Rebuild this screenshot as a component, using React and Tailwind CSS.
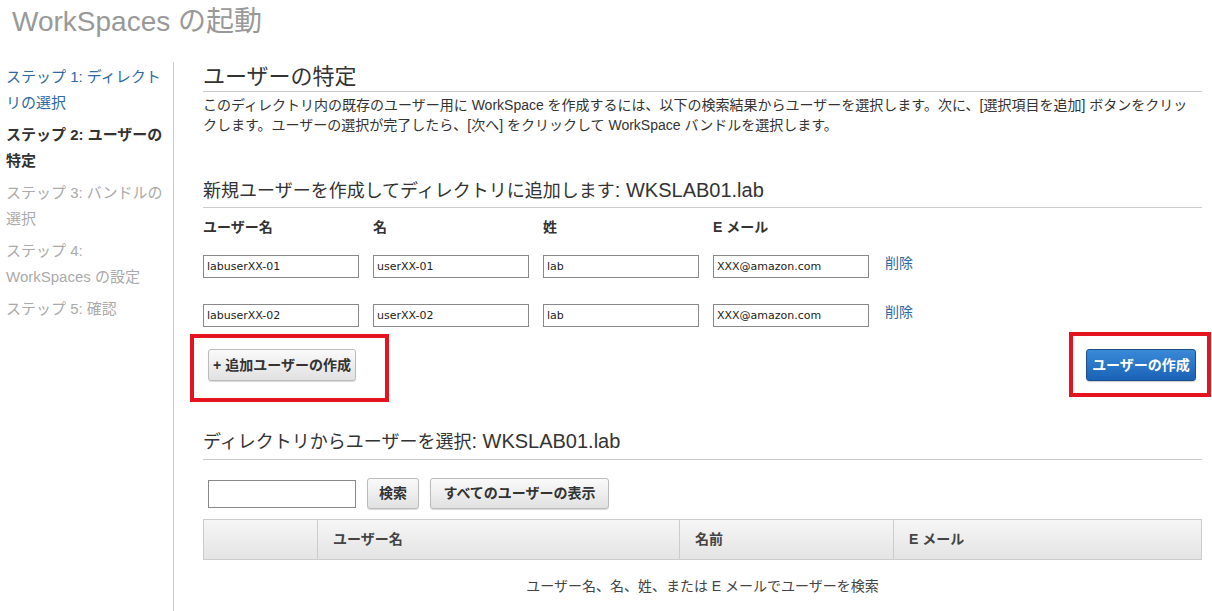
const FONT = "font-['Liberation_Sans','Noto_Sans_CJK_JP',sans-serif]";

const steps = [
  { lines: ['ステップ 1: ディレクト', 'リの選択'], cls: 'text-[#2d6aa3]' },
  { lines: ['ステップ 2: ユーザーの', '特定'], cls: 'text-[#333] font-bold' },
  { lines: ['ステップ 3: バンドルの', '選択'], cls: 'text-[#aaa]' },
  { lines: ['ステップ 4:', 'WorkSpaces の設定'], cls: 'text-[#aaa]' },
  { lines: ['ステップ 5: 確認'], cls: 'text-[#aaa]' },
];

const users = [
  ['labuserXX-01', 'userXX-01', 'lab', 'XXX@amazon.com'],
  ['labuserXX-02', 'userXX-02', 'lab', 'XXX@amazon.com'],
];

function Field({ value }) {
  return (
    <input
      readOnly
      value={value}
      className="w-[156px] h-[23px] border border-[#888] px-[3px] text-[11px] text-[#222] font-['DejaVu_Sans',sans-serif] outline-none"
    />
  );
}

function GrayButton({ children, className = '' }) {
  return (
    <button className={`rounded-[3px] border border-[#bbb] bg-gradient-to-b from-[#fafafa] to-[#e1e1e1] shadow-[0_1px_1px_rgba(0,0,0,0.15)] text-[14px] font-bold text-[#333] ${className}`}>
      {children}
    </button>
  );
}

export default function App() {
  return (
    <div className={`w-[1212px] h-[611px] overflow-hidden bg-white ${FONT}`}>
      <div className="h-[62px] pl-[12px] pt-[2px] text-[28px] leading-[40px] text-[#999]">
        WorkSpaces の起動
      </div>

      <div className="flex h-[549px]">
        {/* Steps */}
        <div className="w-[174px] shrink-0 border-r border-[#ccc] pl-[6px] pt-[2px] flex flex-col gap-[6px] text-[15px] leading-[26px]">
          {steps.map((s, i) => (
            <div key={i} className={s.cls}>
              {s.lines.map((l, j) => (
                <div key={j} className="whitespace-nowrap">{l}</div>
              ))}
            </div>
          ))}
        </div>

        {/* Main */}
        <div className="flex-1 pl-[29px] pr-[10px]">
          <h1 className="text-[22px] leading-[29px] text-[#333] border-b border-[#ccc]">ユーザーの特定</h1>
          <p className="mt-[3px] text-[14px] leading-[20px] text-[#333] whitespace-nowrap">
            このディレクトリ内の既存のユーザー用に WorkSpace を作成するには、以下の検索結果からユーザーを選択します。次に、[選択項目を追加] ボタンをクリッ
            <br />
            クします。ユーザーの選択が完了したら、[次へ] をクリックして WorkSpace バンドルを選択します。
          </p>

          <h2 className="mt-[43px] text-[18px] leading-[24px] pb-[4px] text-[#333] border-b border-[#ccc]">
            新規ユーザーを作成してディレクトリに追加します<span className="text-[20px]">: WKSLAB01.lab</span>
          </h2>

          <div className="mt-[10px] flex gap-[14px] text-[14px] leading-[18px] font-bold text-[#333]">
            <div className="w-[156px]">ユーザー名</div>
            <div className="w-[156px]">名</div>
            <div className="w-[156px]">姓</div>
            <div className="w-[156px]">E メール</div>
          </div>

          <div className="mt-[19px] flex flex-col gap-[26px]">
            {users.map((u, i) => (
              <div key={i} className="flex items-start gap-[14px]">
                {u.map((v, j) => (
                  <Field key={j} value={v} />
                ))}
                <span className="ml-[2px] -mt-[2px] text-[14px] text-[#2d6aa3]">削除</span>
              </div>
            ))}
          </div>

          <div className="flex items-start justify-between">
            <div className="-ml-[13px] mt-[7px] border-4 border-[#e3141d] pl-[14px] pt-[11px] pr-[29px] pb-[17px]">
              <GrayButton className="w-[148px] h-[32px]">+ 追加ユーザーの作成</GrayButton>
            </div>
            <div className="-mr-[9px] mt-[5px] border-4 border-[#e3141d] pl-[13px] pt-[13px] pr-[11px] pb-[12px]">
              <button className="w-[110px] h-[32px] rounded-[3px] border border-[#1a4f8f] bg-gradient-to-b from-[#3a8ad8] to-[#1a62b6] text-[14px] font-bold text-white shadow-[0_1px_1px_rgba(0,0,0,0.2)]">
                ユーザーの作成
              </button>
            </div>
          </div>

          <h2 className="mt-[27px] text-[18px] leading-[24px] pb-[5px] text-[#333] border-b border-[#ccc]">
            ディレクトリからユーザーを選択<span className="text-[20px]">: WKSLAB01.lab</span>
          </h2>

          <div className="mt-[18px] ml-[5px] flex items-center gap-[11px]">
            <input readOnly className="w-[148px] h-[28px] border border-[#888] outline-none" />
            <GrayButton className="w-[52px] h-[31px]">検索</GrayButton>
            <GrayButton className="w-[179px] h-[31px]">すべてのユーザーの表示</GrayButton>
          </div>

          <div className="mt-[10px] flex h-[41px] border border-[#ccc] bg-gradient-to-b from-[#f6f6f6] to-[#e4e4e4] text-[14px] font-bold text-[#444]">
            <div className="w-[114px] border-r border-[#ccc]" />
            <div className="w-[362px] border-r border-[#ccc] pl-[15px] flex items-center">ユーザー名</div>
            <div className="w-[214px] border-r border-[#ccc] pl-[15px] flex items-center">名前</div>
            <div className="flex-1 pl-[15px] flex items-center">E メール</div>
          </div>
          <div className="h-[52px] flex items-center justify-center text-[14px] text-[#444]">
            ユーザー名、名、姓、または E メールでユーザーを検索
          </div>
        </div>
      </div>
    </div>
  );
}
